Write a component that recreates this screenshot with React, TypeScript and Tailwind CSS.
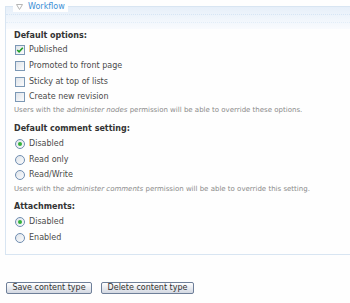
import React from "react";

const Check = ({ checked }: { checked?: boolean }) => (
  <span className="relative inline-flex h-[10px] w-[10px] shrink-0 items-center justify-center border border-[#7c98b5] bg-gradient-to-br from-[#dfe4ea] to-[#fbfbfc]">
    {checked && (
      <svg width="8" height="8" viewBox="0 0 8 8">
        <path d="M1.2 4 L3.1 5.9 L6.8 1.8" fill="none" stroke="#1f9d24" strokeWidth="1.6" />
      </svg>
    )}
  </span>
);

const Radio = ({ checked }: { checked?: boolean }) => (
  <span className="inline-flex h-[10px] w-[10px] shrink-0 items-center justify-center rounded-full border border-[#6f8db0] bg-gradient-to-br from-[#dfe4ea] to-[#fbfbfc]">
    {checked && <span className="h-[4px] w-[4px] rounded-full bg-[#33b23a]" />}
  </span>
);

const Row = ({ children, label }: { children: React.ReactNode; label: string }) => (
  <div className="flex h-[15.67px] items-center gap-[4px] pl-[9px]">
    {children}
    <span className="text-[8px] text-[#4a4a4a]">{label}</span>
  </div>
);

const Heading = ({ text, className }: { text: string; className?: string }) => (
  <div className={"h-[14px] pl-[8px] text-[8px] leading-[14px] font-bold text-[#333] " + (className ?? "")}>
    {text}
  </div>
);

const Help = ({ children, className }: { children: React.ReactNode; className?: string }) => (
  <div className={"h-[10px] whitespace-nowrap pl-[8px] text-[7px] leading-[10px] text-[#8a8a8a] " + (className ?? "")}>
    {children}
  </div>
);

export default function App() {
  return (
    <div className="h-[303px] w-[350px] overflow-hidden bg-[#fefefe] font-['DejaVu_Sans',sans-serif]">
      <div className="ml-[5px] mt-[6px] w-[360px] border border-[#d8e5f2]">
        <div className="relative h-[22px] bg-gradient-to-b from-[#e6eff9] to-[#f9fbfe]">
          <div className="absolute -top-[6px] left-[7px] flex h-[11px] items-center gap-[5px] bg-[#fefefe] px-[3px]">
            <svg width="7" height="6" viewBox="0 0 7 6">
              <path d="M0.5 0.5 H6.5 L3.5 5.5 Z" fill="none" stroke="#b5b5b5" strokeWidth="1" />
            </svg>
            <span className="text-[8px] leading-[11px] text-[#3b8fd6]">Workflow</span>
          </div>
          <div className="h-[8px] border-b border-dotted border-[#d6e5f5]" />
          <div className="h-[8px] border-b border-dotted border-[#e2edf8]" />
        </div>

        <Heading text="Default options:" className="mt-[-0.5px]" />
        <Row label="Published">
          <Check checked />
        </Row>
        <Row label="Promoted to front page">
          <Check />
        </Row>
        <Row label="Sticky at top of lists">
          <Check />
        </Row>
        <Row label="Create new revision">
          <Check />
        </Row>
        <Help>
          Users with the <em className="italic">administer nodes</em> permission will be able to override these options.
        </Help>

        <Heading text="Default comment setting:" className="mt-[7px]" />
        <Row label="Disabled">
          <Radio checked />
        </Row>
        <Row label="Read only">
          <Radio />
        </Row>
        <Row label="Read/Write">
          <Radio />
        </Row>
        <Help className="mt-[1px]">
          Users with the <em className="italic">administer comments</em> permission will be able to override this setting.
        </Help>

        <Heading text="Attachments:" className="mt-[6px]" />
        <Row label="Disabled">
          <Radio checked />
        </Row>
        <Row label="Enabled">
          <Radio />
        </Row>
        <div className="h-[9px]" />
      </div>

      <div className="ml-[6px] mt-[27px] flex gap-[9px]">
        <button className="h-[12px] w-[86px] rounded-[2px] border border-[#6e7f99] bg-gradient-to-b from-[#ffffff] to-[#d3d8e2] text-[8px] leading-[10px] text-[#333]">
          Save content type
        </button>
        <button className="h-[12px] w-[93px] rounded-[2px] border border-[#6e7f99] bg-gradient-to-b from-[#ffffff] to-[#d3d8e2] text-[8px] leading-[10px] text-[#333]">
          Delete content type
        </button>
      </div>
    </div>
  );
}
